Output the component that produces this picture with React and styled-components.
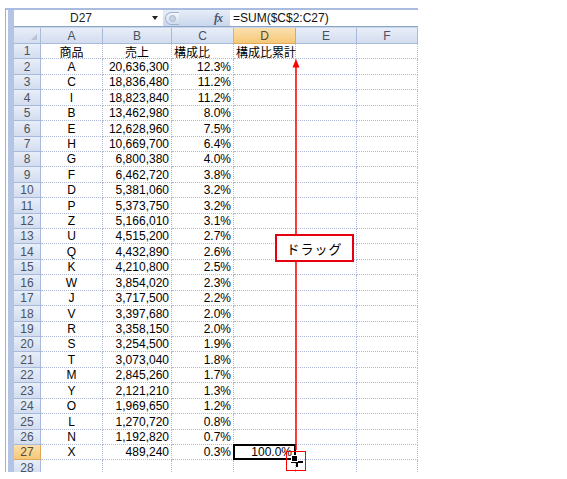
import React from 'react';
import styled, { createGlobalStyle, css } from 'styled-components';

const Global = createGlobalStyle`
  html, body { margin: 0; padding: 0; background: #fff; }
  body { font-family: "Liberation Sans", "Noto Sans CJK JP", sans-serif; color: #000; }
`;

const Page = styled.div`
  position: relative;
  width: 567px;
  height: 479px;
  padding: 8px 0 0 5px;
  box-sizing: border-box;
  overflow: hidden;
  background: #fff;
`;

const Window = styled.div`
  width: 413px;
  height: 464px;
  display: flex;
  box-sizing: border-box;
  border-left: 1px solid #a8afbd;
  border-top: 2px solid #a9bce0;
  overflow: hidden;
`;

const Strip = styled.div`
  width: 6px;
  margin-left: 2px;
  flex: none;
  background: #b4c4e4;
`;

const Main = styled.div`
  flex: 1;
  display: flex;
  flex-direction: column;
  min-width: 0;
`;

const FormulaBar = styled.div`
  height: 16px;
  flex: none;
  display: flex;
  align-items: stretch;
  font-size: 12px;
`;

const NameBox = styled.div`
  width: 149px;
  background: #fff;
  display: flex;
  align-items: center;
  justify-content: space-between;
  padding: 0 5px 0 56px;
  box-sizing: border-box;
  color: #222;
`;

const DropArrow = styled.span`
  width: 0;
  height: 0;
  border-left: 3px solid transparent;
  border-right: 3px solid transparent;
  border-top: 4px solid #222;
`;

const Splitter = styled.div`
  width: 67px;
  display: flex;
  align-items: center;
  justify-content: space-between;
  padding: 0 8px 0 2px;
  box-sizing: border-box;
  background: linear-gradient(#e6edf8, #c9d6ec);
`;

const Pill = styled.span`
  width: 14px;
  height: 13px;
  border-radius: 7px 0 0 7px;
  border: 1px solid #9fb2d2;
  border-right: none;
  background: linear-gradient(#f4f7fc, #cfdbee);
  display: flex;
  align-items: center;
  padding-left: 3px;
  box-sizing: border-box;
  &::before {
    content: '';
    width: 5px;
    height: 5px;
    border-radius: 50%;
    background: #c8d3e6;
    border: 1px solid #aab8d0;
  }
`;

const Fx = styled.span`
  font-family: "Liberation Serif", serif;
  font-style: italic;
  font-weight: bold;
  font-size: 12px;
  color: #4a5670;
  letter-spacing: -1px;
`;

const FormulaInput = styled.div`
  flex: 1;
  background: #fff;
  display: flex;
  align-items: center;
  padding-left: 3px;
  color: #111;
`;

const Divider = styled.div`
  height: 2px;
  flex: none;
  border-top: 1px solid #8ea6c6;
  box-sizing: border-box;
  background: #c8d5ec;
`;

const Grid = styled.div`
  flex: 1;
  display: grid;
  grid-template-columns: 27px 62px 69px 62px 62px 61px 61px;
  grid-template-rows: ${(p) => p.$rows};
  font-size: 12px;
  overflow: hidden;
`;

const headerBase = css`
  background: linear-gradient(#e8eef8, #d3ddef);
  border-right: 1px solid #a7badb;
  border-bottom: 1px solid #a7badb;
  box-sizing: border-box;
  display: flex;
  align-items: center;
  justify-content: center;
  color: #4a5262;
  font-size: 12px;
  ${(p) =>
    p.$active &&
    css`
      background: linear-gradient(#fbe0ad, #f6c878);
      border-right-color: #e0a95a;
      border-bottom-color: #e0a95a;
      color: #5a4a30;
    `}
`;

const Corner = styled.div`
  ${headerBase};
  position: relative;
  &::after {
    content: '';
    position: absolute;
    right: 3px;
    bottom: 3px;
    width: 0;
    height: 0;
    border-left: 6px solid transparent;
    border-bottom: 6px solid #b9c4d6;
  }
`;

const ColHeader = styled.div`
  ${headerBase};
`;

const RowHeader = styled.div`
  ${headerBase};
`;

const Cell = styled.div`
  position: relative;
  border-right: 1px dotted #aebad8;
  border-bottom: 1px dotted #aebad8;
  box-sizing: border-box;
  display: flex;
  align-items: center;
  justify-content: ${(p) => (p.$align === 'right' ? 'flex-end' : p.$align === 'center' ? 'center' : 'flex-start')};
  padding: 0 ${(p) => (p.$align === 'right' ? '2px' : '0')} 0 ${(p) => (p.$align === 'left' ? '2px' : '0')};
  white-space: nowrap;
  overflow: visible;
  ${(p) =>
    p.$selected &&
    css`
      padding-right: 3px;
      &::after {
        content: '';
        position: absolute;
        left: -1px;
        top: -1px;
        right: -1px;
        bottom: -1px;
        border: 2px solid #000;
      }
      &::before {
        content: '';
        position: absolute;
        right: -3px;
        bottom: -3px;
        width: 5px;
        height: 5px;
        background: #000;
        border: 1px solid #fff;
        z-index: 1;
      }
    `}
`;

const Arrow = styled.svg`
  position: absolute;
  left: 290px;
  top: 58px;
`;

const Callout = styled.div`
  position: absolute;
  left: 275px;
  top: 234px;
  width: 79px;
  height: 28px;
  box-sizing: border-box;
  border: 2px solid #e60012;
  background: #fff;
  display: flex;
  align-items: center;
  justify-content: center;
  font-family: "Noto Sans CJK JP", sans-serif;
  font-size: 13px;
  letter-spacing: 1px;
  color: #000;
`;

const HandleBox = styled.div`
  position: absolute;
  left: 286px;
  top: 451px;
  width: 20px;
  height: 20px;
  box-sizing: border-box;
  border: 1px solid #f00;
`;

const Cursor = styled.svg`
  position: absolute;
  left: 290px;
  top: 455px;
`;

const cols = ['A', 'B', 'C', 'D', 'E', 'F'];

const data = [
  ['A', '20,636,300', '12.3%'],
  ['C', '18,836,480', '11.2%'],
  ['I', '18,823,840', '11.2%'],
  ['B', '13,462,980', '8.0%'],
  ['E', '12,628,960', '7.5%'],
  ['H', '10,669,700', '6.4%'],
  ['G', '6,800,380', '4.0%'],
  ['F', '6,462,720', '3.8%'],
  ['D', '5,381,060', '3.2%'],
  ['P', '5,373,750', '3.2%'],
  ['Z', '5,166,010', '3.1%'],
  ['U', '4,515,200', '2.7%'],
  ['Q', '4,432,890', '2.6%'],
  ['K', '4,210,800', '2.5%'],
  ['W', '3,854,020', '2.3%'],
  ['J', '3,717,500', '2.2%'],
  ['V', '3,397,680', '2.0%'],
  ['R', '3,358,150', '2.0%'],
  ['S', '3,254,500', '1.9%'],
  ['T', '3,073,040', '1.8%'],
  ['M', '2,845,260', '1.7%'],
  ['Y', '2,121,210', '1.3%'],
  ['O', '1,969,650', '1.2%'],
  ['L', '1,270,720', '0.8%'],
  ['N', '1,192,820', '0.7%'],
  ['X', '489,240', '0.3%'],
];

export default function App() {
  const rowCount = 28;
  const heights = ['16px'];
  for (let k = 0; k < rowCount; k++) {
    const h = Math.round((k + 1) * 15.42) - Math.round(k * 15.42);
    heights.push(h + 'px');
  }
  const rowsTemplate = heights.join(' ');

  const rows = [];
  rows.push(
    <React.Fragment key="r1">
      <RowHeader>1</RowHeader>
      <Cell $align="center">商品</Cell>
      <Cell $align="center">売上</Cell>
      <Cell $align="left">構成比</Cell>
      <Cell $align="left">構成比累計</Cell>
      <Cell />
      <Cell />
    </React.Fragment>
  );
  data.forEach((d, i) => {
    const n = i + 2;
    const last = n === 27;
    rows.push(
      <React.Fragment key={'r' + n}>
        <RowHeader $active={last}>{n}</RowHeader>
        <Cell $align="center">{d[0]}</Cell>
        <Cell $align="right">{d[1]}</Cell>
        <Cell $align="right">{d[2]}</Cell>
        <Cell $align="right" $selected={last}>{last ? '100.0%' : ''}</Cell>
        <Cell />
        <Cell />
      </React.Fragment>
    );
  });
  rows.push(
    <React.Fragment key="r28">
      <RowHeader>28</RowHeader>
      <Cell />
      <Cell />
      <Cell />
      <Cell />
      <Cell />
      <Cell />
    </React.Fragment>
  );

  return (
    <>
      <Global />
      <Page>
        <Window>
          <Strip />
          <Main>
            <FormulaBar>
              <NameBox>
                <span>D27</span>
                <DropArrow />
              </NameBox>
              <Splitter>
                <Pill />
                <Fx>fx</Fx>
              </Splitter>
              <FormulaInput>=SUM($C$2:C27)</FormulaInput>
            </FormulaBar>
            <Divider />
            <Grid $rows={rowsTemplate}>
              <Corner />
              {cols.map((c) => (
                <ColHeader key={c} $active={c === 'D'}>{c}</ColHeader>
              ))}
              {rows}
            </Grid>
          </Main>
        </Window>
        <Arrow width="12" height="394" viewBox="0 0 12 394">
          <line x1="6" y1="8" x2="6" y2="392" stroke="#ff0000" strokeWidth="1.5" />
          <polygon points="6,1 2.5,9.5 9.5,9.5" fill="#ff0000" />
        </Arrow>
        <Callout>ドラッグ</Callout>
        <HandleBox />
        <Cursor width="14" height="14" viewBox="0 0 14 14">
          <line x1="1" y1="7" x2="13" y2="7" stroke="#000" strokeWidth="2" />
          <line x1="7" y1="1" x2="7" y2="12" stroke="#000" strokeWidth="2" />
        </Cursor>
      </Page>
    </>
  );
}
